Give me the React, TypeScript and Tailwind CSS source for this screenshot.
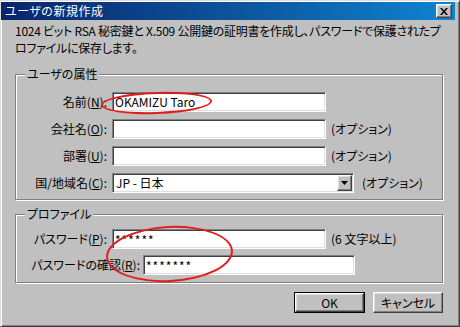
import React from "react"

const jp = "font-['Noto_Sans_CJK_JP',sans-serif] [font-feature-settings:'palt']"
const sunken =
  "bg-white border border-t-[#808080] border-l-[#808080] border-r-white border-b-white shadow-[inset_1px_1px_0_#404040,inset_-1px_-1px_0_#dfdfdf]"
const raised =
  "bg-[#c0c0c0] border border-t-white border-l-white border-r-[#404040] border-b-[#404040] shadow-[inset_-1px_-1px_0_#808080,inset_1px_1px_0_#dfdfdf]"

function Key({ k }: { k: string }) {
  return <span className="underline underline-offset-1">{k}</span>
}

function Group({ title, className, children }: { title: string; className?: string; children: React.ReactNode }) {
  return (
    <div className={`relative border border-[#808080] shadow-[inset_1px_1px_0_#fff,1px_1px_0_#fff] ${className ?? ""}`}>
      <span className="absolute -top-[9px] left-[9px] bg-[#c0c0c0] px-[2px] leading-[16px]">{title}</span>
      {children}
    </div>
  )
}

function Row({ label, children }: { label: React.ReactNode; children: React.ReactNode }) {
  return (
    <div className="flex items-center gap-[5px] h-[20px]">
      <label className="w-[91px] text-right whitespace-nowrap">{label}</label>
      {children}
    </div>
  )
}

export default function App() {
  return (
    <div className={`relative w-[460px] h-[327px] bg-[#c0c0c0] text-[12px] text-black ${jp} flex flex-col border border-t-[#dfdfdf] border-l-[#dfdfdf] border-r-[#404040] border-b-[#404040] shadow-[inset_1px_1px_0_#fff,inset_-1px_-1px_0_#808080] pt-[1px] pr-[4px] pb-[2px]`}>
      {/* title bar */}
      <div className="h-[18px] flex items-center justify-between bg-gradient-to-r from-[#0a246a] to-[#1084d0] pl-[4px] pr-[3px]">
        <span className="text-white leading-none tracking-[0.5px]">ユーザの新規作成</span>
        <button className={`${raised} w-[16px] h-[14px] flex items-center justify-center`}>
          <svg width="8" height="7" viewBox="0 0 8 7">
            <path d="M0 0h2l2 2.5L6 0h2L5 3.5 8 7H6L4 4.5 2 7H0l3-3.5z" fill="#000" />
          </svg>
        </button>
      </div>

      <div className="flex-1 flex flex-col pl-[14px] pr-[12px]">
        <div className="mt-[2px] tracking-[-0.25px] whitespace-nowrap leading-[17px]">
          <div>1024 ビット RSA 秘密鍵と X.509 公開鍵の証明書を作成し、パスワードで保護されたプ</div>
          <div>ロファイルに保存します。</div>
        </div>

        <Group title="ユーザの属性" className="mt-[18px] h-[126px] pt-[17px] flex flex-col gap-[7px]">
          <Row label={<>名前(<Key k="N" />):</>}>
            <div className={`${sunken} w-[214px] h-[20px] px-[2px] leading-[18px]`}>OKAMIZU Taro</div>
          </Row>
          <Row label={<>会社名(<Key k="O" />):</>}>
            <div className={`${sunken} w-[214px] h-[20px]`} />
            <span className="whitespace-nowrap">(オプション)</span>
          </Row>
          <Row label={<>部署(<Key k="U" />):</>}>
            <div className={`${sunken} w-[214px] h-[20px]`} />
            <span className="whitespace-nowrap">(オプション)</span>
          </Row>
          <Row label={<>国/地域名(<Key k="C" />):</>}>
            <div className={`${sunken} w-[242px] h-[20px] flex items-center justify-between pl-[3px] pr-[1px]`}>
              <span>JP - 日本</span>
              <span className={`${raised} w-[15px] h-[16px] flex items-center justify-center`}>
                <svg width="7" height="4" viewBox="0 0 7 4">
                  <path d="M0 0h7L3.5 4z" fill="#000" />
                </svg>
              </span>
            </div>
            <span className="ml-[3px] whitespace-nowrap">(オプション)</span>
          </Row>
        </Group>

        <Group title="プロファイル" className="mt-[14px] h-[69px] pt-[14px] flex flex-col gap-[6px]">
          <Row label={<>パスワード(<Key k="P" />):</>}>
            <div className={`${sunken} w-[214px] h-[20px] px-[2px] leading-[20px] tracking-[1px]`}>******</div>
            <span className="whitespace-nowrap">(6 文字以上)</span>
          </Row>
          <div className="flex items-center gap-[3px] h-[20px]">
            <label className="w-[124px] text-right whitespace-nowrap">
              パスワードの確認(<Key k="R" />):
            </label>
            <div className={`${sunken} w-[212px] h-[20px] px-[2px] leading-[20px] tracking-[1px]`}>*******</div>
          </div>
        </Group>

        <div className="mt-[9px] flex justify-end gap-[8px]">
          <button className="w-[71px] h-[21px] border border-black">
            <div className={`${raised} w-full h-full flex items-center justify-center`}>OK</div>
          </button>
          <button className={`${raised} w-[70px] h-[21px] flex items-center justify-center`}>キャンセル</button>
        </div>
      </div>

      {/* red annotation ellipses */}
      <div className="absolute left-[100px] top-[91px] w-[111px] h-[22px] rounded-[50%] border-2 border-[#e41b1b] -rotate-2 pointer-events-none" />
      <div className="absolute left-[105px] top-[225px] w-[127px] h-[56px] rounded-[50%] border-2 border-[#e41b1b] -rotate-3 pointer-events-none" />
    </div>
  )
}
